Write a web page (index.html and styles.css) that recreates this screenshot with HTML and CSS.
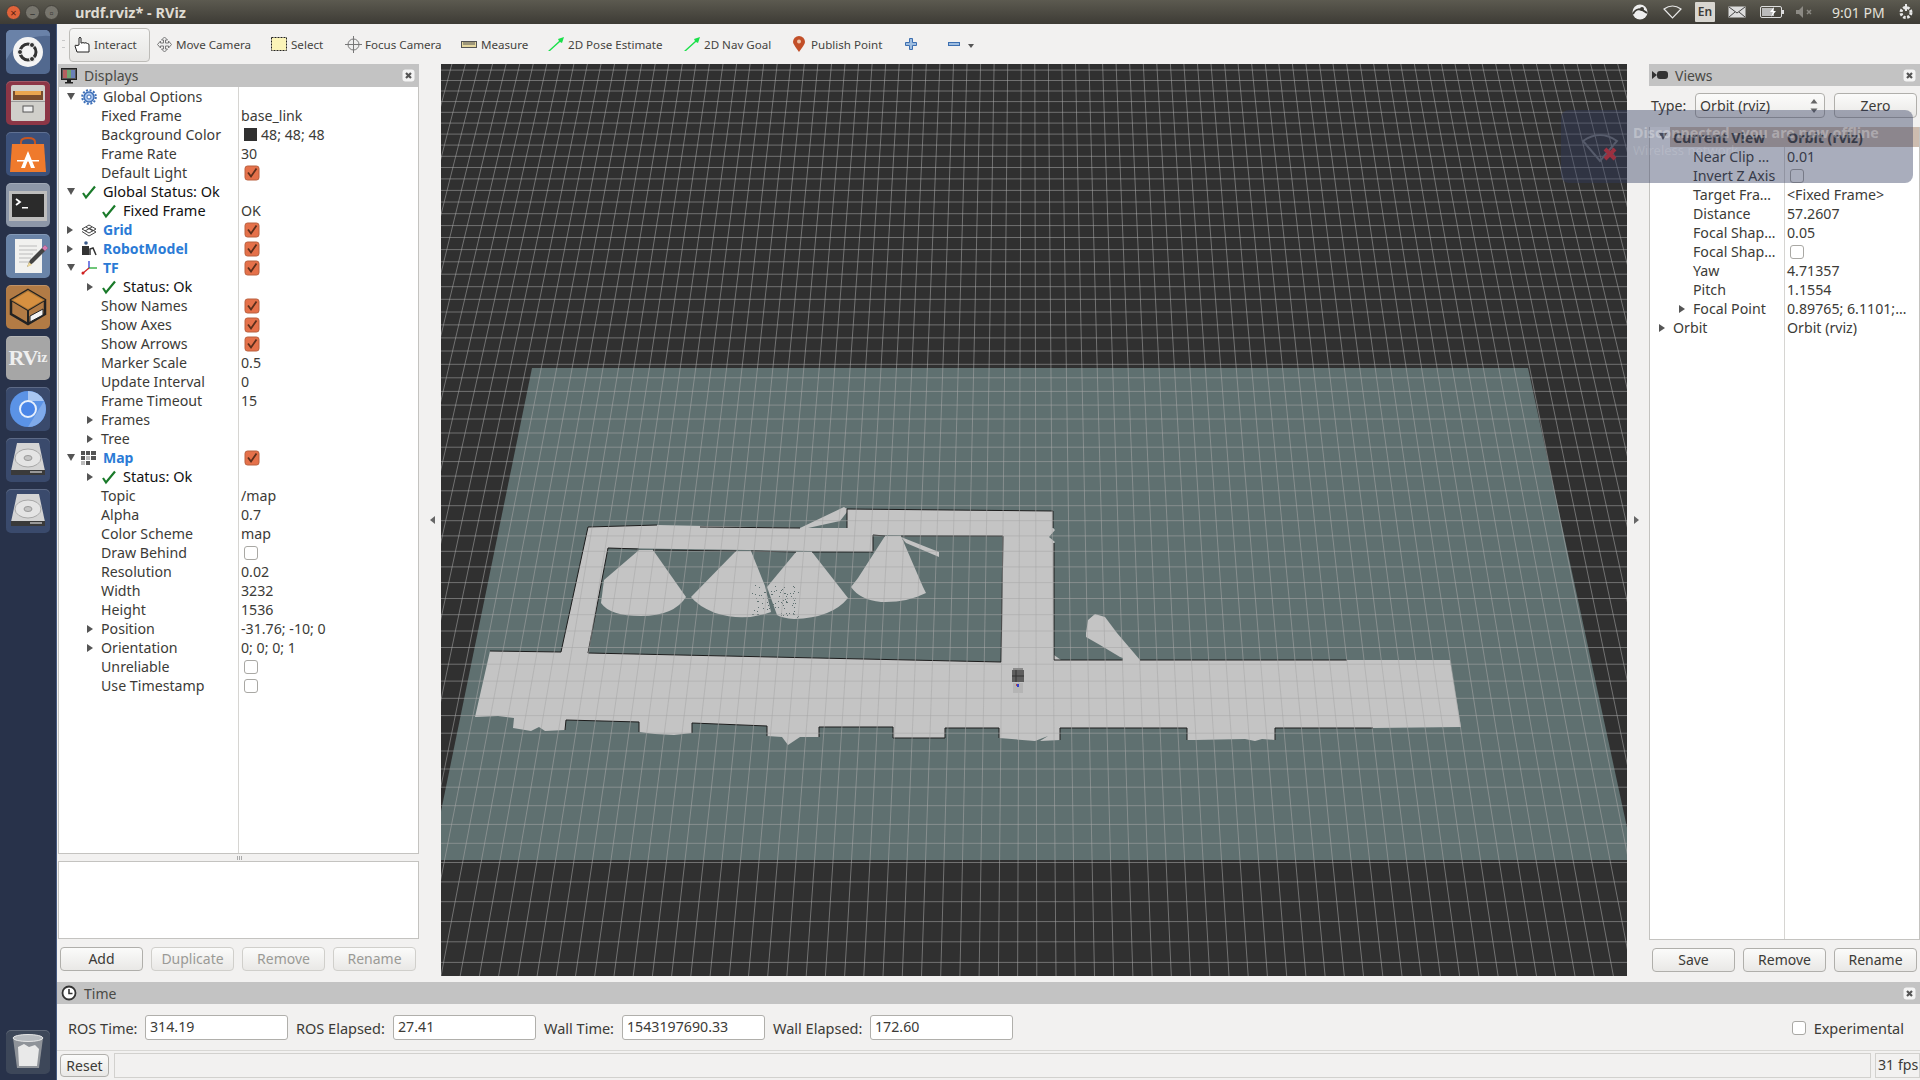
FILE: index.html
```html
<!DOCTYPE html>
<html lang="en">
<head>
<meta charset="utf-8">
<title>urdf.rviz* - RViz</title>
<link rel="stylesheet" href="styles.css">
</head>
<body>
<svg class="defs" width="0" height="0">
  <symbol id="chk" viewBox="0 0 16 16"><path d="M2 9l3 4.500L14 2.500" fill="none" stroke="#1a7a2a" stroke-width="2.200"/></symbol>
  <symbol id="cbx" viewBox="0 0 16 16"><rect x="1" y="1" width="14" height="14" rx="2.500" fill="#e5714a" stroke="#b9603f"/><path d="M4 7.500l3 4 5.500-8" fill="none" stroke="#5b2f1c" stroke-width="1.800"/></symbol>
  <symbol id="cls" viewBox="0 0 13 13"><rect x="0.500" y="0.500" width="12" height="12" rx="3" fill="#f4f4f4"/><path d="M4 4l5 5M9 4l-5 5" stroke="#555" stroke-width="2.200"/></symbol>
  <symbol id="disk" viewBox="0 0 44 44"><path d="M11 5h22l6 28v4H5v-4z" fill="#d4d4d4"/><ellipse cx="22" cy="20" rx="13" ry="9" fill="#e4e4e4" stroke="#a8a8a8"/><ellipse cx="22" cy="20" rx="4" ry="2.500" fill="#c4c4c4" stroke="#999"/><rect x="5" y="32" width="34" height="5" fill="#3a3a3a"/><rect x="24" y="33" width="12" height="2" fill="#999"/></symbol>
</svg>

<header class="topbar">
  <div class="winbtns">
    <span class="wb wb-close">×</span><span class="wb">–</span><span class="wb">▫</span>
  </div>
  <span class="wintitle">urdf.rviz* - RViz</span>
  <div class="tray">
    <svg class="t-ic" width="16" height="16" viewBox="0 0 16 16"><circle cx="8" cy="8" r="7.500" fill="#eee"/><path d="M1 10c3-6 7-6 14-1" fill="none" stroke="#3d3b35" stroke-width="2"/><circle cx="10" cy="5" r="2" fill="#3d3b35"/></svg>
    <svg class="t-ic" width="19" height="14" viewBox="0 0 19 14"><path d="M1 4q8.500-6 17 0l-8.500 9z" fill="none" stroke="#e8e8e8" stroke-width="1.200"/></svg>
    <span class="lang">En</span>
    <svg class="t-ic" width="18" height="12" viewBox="0 0 18 12"><rect x="0.500" y="0.500" width="17" height="11" fill="#ddd"/><path d="M1 1l8 6 8-6M1 11l6-5M17 11l-6-5" fill="none" stroke="#444"/></svg>
    <svg class="t-ic" width="24" height="12" viewBox="0 0 24 12"><rect x="0.500" y="0.500" width="21" height="11" rx="1.500" fill="none" stroke="#ddd"/><rect x="2" y="2" width="12" height="8" fill="#bbb"/><path d="M14 1l-4 5h3l-2 5 5-6h-3z" fill="#fff"/><rect x="22" y="4" width="2" height="4" fill="#ddd"/></svg>
    <svg class="t-ic t-mute" width="18" height="12" viewBox="0 0 18 12"><path d="M0 4h3l4-4v12l-4-4H0z" fill="#8c8a84"/><path d="M11 4l4 4M15 4l-4 4" stroke="#8c8a84" stroke-width="1.500"/></svg>
    <span class="clock">9:01 PM</span>
    <svg class="t-ic" width="16" height="16" viewBox="0 0 16 16"><circle cx="8" cy="8.500" r="5" fill="none" stroke="#e8e8e8" stroke-width="3" stroke-dasharray="2.500 1.500"/><path d="M8 0v7" stroke="#e8e8e8" stroke-width="2"/></svg>
  </div>
</header>

<div class="desk">
  <nav class="launcher">
    <div class="tile t-ubuntu"><svg width="44" height="44" viewBox="0 0 44 44"><path d="M0 30Q14 4 44 6V0H0z" fill="#6a82a8"/><circle cx="22" cy="22" r="15" fill="#f4f4f4"/><circle cx="22" cy="22" r="8" fill="none" stroke="#333" stroke-width="3"/><circle cx="14" cy="22" r="2.500" fill="#333" stroke="#f4f4f4"/><circle cx="26" cy="15" r="2.500" fill="#333" stroke="#f4f4f4"/><circle cx="26" cy="29" r="2.500" fill="#333" stroke="#f4f4f4"/></svg></div>
    <div class="tile t-files"><svg width="44" height="44" viewBox="0 0 44 44"><rect x="5" y="4" width="34" height="36" rx="2" fill="#d0cfca"/><rect x="7" y="10" width="30" height="9" fill="#7a4d2c"/><rect x="9" y="10" width="26" height="4" fill="#e9a64f"/><rect x="5" y="20" width="34" height="1" fill="#999"/><rect x="17" y="25" width="10" height="6" fill="#eee" stroke="#555"/></svg></div>
    <div class="tile t-soft"><svg width="44" height="44" viewBox="0 0 44 44"><path d="M15 12v-2q0-4 7-4t7 4v2" fill="none" stroke="#c9561f" stroke-width="2"/><path d="M6 12h32l2 28H4z" fill="#ef7a2c"/><path d="M22 19l-7 17h4l3-8 3 8h4z" fill="#fff"/><rect x="11" y="28" width="22" height="1.500" fill="#fff"/></svg></div>
    <div class="tile t-term"><svg width="44" height="44" viewBox="0 0 44 44"><rect x="3" y="8" width="38" height="30" fill="#bdbdbd"/><rect x="6" y="11" width="32" height="23" fill="#2b2b2b"/><path d="M10 16l4 3-4 3" fill="none" stroke="#fff" stroke-width="1.800"/><rect x="16" y="24" width="6" height="1.500" fill="#fff"/></svg></div>
    <div class="tile t-edit"><svg width="44" height="44" viewBox="0 0 44 44"><rect x="9" y="5" width="27" height="34" fill="#f1f1ef"/><path d="M13 12h18M13 16h18M13 20h14M13 24h12M13 28h10" stroke="#bbb"/><path d="M21 33l3-7 15-15 3 3-15 15z" fill="#444"/><path d="M36 14l3-3 3 3-3 3z" fill="#d67ab0"/><path d="M21 33l2-5 3 3z" fill="#ecd79a"/></svg></div>
    <div class="tile t-sub"><svg width="44" height="44" viewBox="0 0 44 44"><path d="M22 5l17 10v14L22 39 5 29V15z" fill="none" stroke="#222" stroke-width="2.500"/><path d="M5 15l17 10 17-10M22 25v14" fill="none" stroke="#222" stroke-width="2"/><path d="M5 15l17-10 17 10-17 10z" fill="#e79a3f" opacity=".7"/><path d="M24 31l13-7v6l-13 7z" fill="#f4f4f4" stroke="#222"/></svg></div>
    <div class="tile t-rviz"><span class="rviz-r">R</span><span class="rviz-v">V</span><span class="rviz-i">iz</span></div>
    <div class="tile t-chrome"><svg width="44" height="44" viewBox="0 0 44 44"><circle cx="22" cy="22" r="18" fill="#5b93e6"/><path d="M22 4a18 18 0 0 1 16 10H22z" fill="#a9c7f2"/><path d="M22 40l8-13 8-13a18 18 0 0 1-16 26z" fill="#7faaea"/><circle cx="22" cy="22" r="8" fill="#4a86e8" stroke="#e8f0fc" stroke-width="2"/></svg></div>
    <div class="tile t-disk"><svg width="44" height="44"><use href="#disk"/></svg></div>
    <div class="tile t-disk"><svg width="44" height="44"><use href="#disk"/></svg></div>
    <div class="launcher-fill"></div>
    <div class="tile t-trash"><svg width="44" height="44" viewBox="0 0 44 44"><path d="M7 8h30l-4 30H11z" fill="#8f9399"/><ellipse cx="22" cy="8" rx="15" ry="3.500" fill="#b7bbc0" stroke="#e5e5e5"/><path d="M12 17l6-3 5 3 6-2 4 4-2 17H13z" fill="#e9e9e9"/></svg></div>
  </nav>

  <div class="app">
    <div class="toolbar">
      <span class="handle"></span>
      <button class="tool tool-on"><svg class="ti ti17" width="17" height="17" viewBox="0 0 17 17"><path d="M5 9V2q1-1.500 2 0v5h1q1-1 2 0h1q1-1 2 .5h.5q1.500 0 1.500 1.500v7H3L1 10q0-1.500 2-.5z" fill="#fff" stroke="#222" stroke-width="1"/></svg>Interact</button>
      <span class="tool t-move"><svg class="ti ti17" width="17" height="17" viewBox="0 0 17 17"><path d="M8.500 1l3 3h-2v3h3v-2l3 3.500-3 3.500v-2h-3v3h2l-3 3-3-3h2v-3h-3v2l-3-3.500 3-3.500v2h3V4h-2z" fill="#eee" stroke="#777"/></svg>Move Camera</span>
      <span class="tool t-select"><svg class="ti" width="16" height="14" viewBox="0 0 16 14"><rect x="0.500" y="0.500" width="15" height="13" fill="#fbf4b8" stroke="#222" stroke-dasharray="2 1"/></svg>Select</span>
      <span class="tool t-focus"><svg class="ti ti17" width="17" height="17" viewBox="0 0 17 17"><circle cx="8.500" cy="8.500" r="5.500" fill="#eee" stroke="#777"/><path d="M8.500 0v17M0 8.500h17" stroke="#777"/></svg>Focus Camera</span>
      <span class="tool t-measure"><svg class="ti" width="16" height="7" viewBox="0 0 16 7"><rect x="0.500" y="0.500" width="15" height="6" fill="#e6d8a0" stroke="#555"/><path d="M3 1v3M5 1v3M7 1v3M9 1v3M11 1v3M13 1v3" stroke="#555"/></svg>Measure</span>
      <span class="tool t-pose"><svg class="ti" width="16" height="14" viewBox="0 0 16 14"><path d="M0 14L11 4l-1-2 6-2-2 6-2-1L2 14z" fill="#1be04a"/></svg>2D Pose Estimate</span>
      <span class="tool t-nav"><svg class="ti" width="16" height="14" viewBox="0 0 16 14"><path d="M0 14L11 4l-1-2 6-2-2 6-2-1L2 14z" fill="#1be04a"/></svg>2D Nav Goal</span>
      <span class="tool t-pub"><svg class="ti ti12" width="12" height="16" viewBox="0 0 12 16"><path d="M6 16Q0 8 0 6a6 6 0 0 1 12 0q0 2-6 10z" fill="#c24f28"/><circle cx="6" cy="5.500" r="2" fill="#eec3a8"/></svg>Publish Point</span>
      <svg class="plus" width="12" height="12" viewBox="0 0 12 12"><path d="M4.500 0.500h3v4h4v3h-4v4h-3v-4h-4v-3h4z" fill="#9ebde0" stroke="#3d6fb0"/></svg>
      <svg class="minus" width="12" height="4" viewBox="0 0 12 4"><rect x="0.500" y="0.500" width="11" height="3" fill="#9ebde0" stroke="#3d6fb0"/></svg>
      <span class="drop"></span>
    </div>

    <div class="work">
      <section class="displays">
        <div class="dock-title">
          <svg class="dock-ic" width="16" height="16" viewBox="0 0 16 16"><rect x="0.500" y="0.500" width="15" height="11" fill="#555" stroke="#222"/><rect x="2" y="2" width="4" height="8" fill="#b45f5f"/><rect x="6" y="2" width="4" height="8" fill="#6fa36f"/><rect x="10" y="2" width="4" height="8" fill="#6a80b8"/><path d="M6 12h4v2h2v1.500H4V14h2z" fill="#222"/></svg>
          <span class="dock-name">Displays</span>
          <svg class="dock-x" width="13" height="13"><use href="#cls"/></svg>
        </div>
        <div class="tree">
          <div class="col-line"></div>
          <div class="row"><div class="name l0"><i class="ar down"></i><svg class="ic" width="16" height="16" viewBox="0 0 16 16"><circle cx="8" cy="8" r="5" fill="#a8c4ec" stroke="#3d6fb8" stroke-width="1.500"/><circle cx="8" cy="8" r="6.800" fill="none" stroke="#3d6fb8" stroke-width="2" stroke-dasharray="2 1.600"/><circle cx="8" cy="8" r="2" fill="#fff" stroke="#3d6fb8"/></svg><span>Global Options</span></div><div class="val"></div></div>
          <div class="row"><div class="name p1">Fixed Frame</div><div class="val">base_link</div></div>
          <div class="row"><div class="name p1">Background Color</div><div class="val"><b class="swatch"></b>48; 48; 48</div></div>
          <div class="row"><div class="name p1">Frame Rate</div><div class="val">30</div></div>
          <div class="row"><div class="name p1">Default Light</div><div class="val"><svg class="cb"><use href="#cbx"/></svg></div></div>
          <div class="row blk"><div class="name l0"><i class="ar down"></i><svg class="ic" width="16" height="16"><use href="#chk"/></svg><span>Global Status: Ok</span></div><div class="val"></div></div>
          <div class="row blk"><div class="name l1"><i class="ar none"></i><svg class="ic" width="16" height="16"><use href="#chk"/></svg><span>Fixed Frame</span></div><div class="val dim">OK</div></div>
          <div class="row"><div class="name l0 blue"><i class="ar right"></i><svg class="ic" width="16" height="16" viewBox="0 0 16 16"><path d="M8 3l7 4-7 4-7-4zM8 6l7 4-7 4" fill="none" stroke="#444"/><path d="M1 9.500L8 14M5 5l7 4M11 5L4 9" fill="none" stroke="#444"/></svg><span>Grid</span></div><div class="val"><svg class="cb"><use href="#cbx"/></svg></div></div>
          <div class="row"><div class="name l0 blue"><i class="ar right"></i><svg class="ic" width="16" height="16" viewBox="0 0 16 16"><circle cx="5" cy="2" r="1.800" fill="#3a5a8a"/><rect x="1" y="5" width="7" height="9" fill="#333"/><path d="M9 14V8l3-1 3 7" fill="none" stroke="#333" stroke-width="1.500"/></svg><span>RobotModel</span></div><div class="val"><svg class="cb"><use href="#cbx"/></svg></div></div>
          <div class="row"><div class="name l0 blue"><i class="ar down"></i><svg class="ic" width="16" height="16" viewBox="0 0 16 16"><path d="M8 8V1" stroke="#2030d0" stroke-width="1.200"/><path d="M8 8h8" stroke="#10a020" stroke-width="1.200"/><path d="M8 8l-7 6" stroke="#d02020" stroke-width="1.200"/><circle cx="2" cy="13" r="1.500" fill="#d02020"/></svg><span>TF</span></div><div class="val"><svg class="cb"><use href="#cbx"/></svg></div></div>
          <div class="row blk"><div class="name l1"><i class="ar right"></i><svg class="ic" width="16" height="16"><use href="#chk"/></svg><span>Status: Ok</span></div><div class="val"></div></div>
          <div class="row"><div class="name p1">Show Names</div><div class="val"><svg class="cb"><use href="#cbx"/></svg></div></div>
          <div class="row"><div class="name p1">Show Axes</div><div class="val"><svg class="cb"><use href="#cbx"/></svg></div></div>
          <div class="row"><div class="name p1">Show Arrows</div><div class="val"><svg class="cb"><use href="#cbx"/></svg></div></div>
          <div class="row"><div class="name p1">Marker Scale</div><div class="val">0.5</div></div>
          <div class="row"><div class="name p1">Update Interval</div><div class="val">0</div></div>
          <div class="row"><div class="name p1">Frame Timeout</div><div class="val">15</div></div>
          <div class="row"><div class="name l1"><i class="ar right"></i><span>Frames</span></div><div class="val"></div></div>
          <div class="row"><div class="name l1"><i class="ar right"></i><span>Tree</span></div><div class="val"></div></div>
          <div class="row"><div class="name l0 blue"><i class="ar down"></i><svg class="ic" width="16" height="16" viewBox="0 0 16 16"><path d="M0 1h4v4H0zM5 1h4v4H5zM10 1h5v4h-5zM0 6h4v4H0zM10 6h5v4h-5zM5 11h4v4H5z" fill="#555"/><path d="M5 6h4v4H5zM0 11h4v4H0z" fill="#bbb"/></svg><span>Map</span></div><div class="val"><svg class="cb"><use href="#cbx"/></svg></div></div>
          <div class="row blk"><div class="name l1"><i class="ar right"></i><svg class="ic" width="16" height="16"><use href="#chk"/></svg><span>Status: Ok</span></div><div class="val"></div></div>
          <div class="row"><div class="name p1">Topic</div><div class="val">/map</div></div>
          <div class="row"><div class="name p1">Alpha</div><div class="val">0.7</div></div>
          <div class="row"><div class="name p1">Color Scheme</div><div class="val">map</div></div>
          <div class="row"><div class="name p1">Draw Behind</div><div class="val"><i class="cb-off"></i></div></div>
          <div class="row"><div class="name p1">Resolution</div><div class="val">0.02</div></div>
          <div class="row"><div class="name p1">Width</div><div class="val">3232</div></div>
          <div class="row"><div class="name p1">Height</div><div class="val">1536</div></div>
          <div class="row"><div class="name l1"><i class="ar right"></i><span>Position</span></div><div class="val">-31.76; -10; 0</div></div>
          <div class="row"><div class="name l1"><i class="ar right"></i><span>Orientation</span></div><div class="val">0; 0; 0; 1</div></div>
          <div class="row"><div class="name p1">Unreliable</div><div class="val"><i class="cb-off"></i></div></div>
          <div class="row"><div class="name p1">Use Timestamp</div><div class="val"><i class="cb-off"></i></div></div>
        </div>
        <div class="split-h"></div>
        <div class="descr"></div>
        <div class="btns">
          <button class="btn">Add</button><button class="btn off">Duplicate</button><button class="btn off">Remove</button><button class="btn off">Rename</button>
        </div>
      </section>

      <div class="gutter"><i class="tri-l"></i></div>

      <div class="canvas">
        <svg id="scene" width="1186" height="912" viewBox="441 64 1186 912">
          <rect x="441" y="64" width="1186" height="912" fill="#303030"/>
          <polygon points="532,368 1528,368 1634,860 431,860" fill="#5f7070"/>
          <path fill="#c4c4c4" fill-rule="evenodd" d="M490,651 561,652 588,527 657,525 753,527 800,528 844,507 847,509 1053,511 1053,528 1055,530 1049,537 1055,542 1054,543 1054,660 1123,660 1123,658 1120,657 1100,645 1086,637 1086,633 1088,620 1095,614 1105,617 1117,633 1140,660 1450,660 1461,727 1373,728 1275,728 1275,740 1262,739 1255,741 1245,739 1195,740 1187,740 1187,728 1060,728 1060,740 1040,741 1048,736 1035,741 999,738 999,728 945,728 945,738 893,738 893,727 819,727 819,737 800,737 788,745 782,737 767,736 767,726 692,723 692,733 674,735 655,734 639,732 639,722 566,720 565,730 545,731 539,727 531,731 513,728 514,718 498,716 475,717Z M608,548 873,552 873,535 1003,536 1001,662 588,653Z M808,528 847,528 847,512 840,521Z"/>
          <path fill="#c4c4c4" d="M639,550H653L686,597Q674,616 641,616Q610,616 601,603L604,580Z"/>
          <path fill="#c4c4c4" d="M736,551H751L765,586 771,612Q744,622 715,613Q698,606 691,597Z"/>
          <path fill="#c4c4c4" d="M796,552H812L848,598Q832,618 794,619Q782,618 777,615L767,587Z"/>
          <path fill="#c4c4c4" d="M885,536H901L923,587 926,593Q906,603 881,602Q860,600 851,587L858,578Z"/>
          <polygon fill="#c4c4c4" points="901,537 939,552 939,557 906,543"/>
          <polygon fill="#c4c4c4" points="1054,655 1061,660 1054,660"/>
          <path fill="none" stroke="#1c1c1c" stroke-width="1" d="M490,651 561,652 588,527 657,525M700,527 800,528M847,528 847,509 1053,511 1053,528M1054,543 1054,660 1123,660M1140,660 1347,660M1373,728 1275,728 1275,740M1187,740 1187,728 1060,728 1060,740M999,738 999,728 945,728 945,738 893,738 893,727 819,727 819,737M767,736 767,726 692,723 692,733M639,732 639,722 566,720 565,730M608,548 639,549M653,550 736,551M751,551 796,552M812,552 873,552 873,535 885,536M901,536 1003,536 1001,662 588,653 608,548"/>
          <g id="specks" fill="#5f7070"></g>
          <g id="grid" stroke="#a8a8a8" stroke-opacity=".55" stroke-width="1"></g>
          <rect x="1012" y="670" width="12" height="12" fill="#5e5e5e"/><rect x="1013" y="668" width="10" height="2" fill="#8b8b8b"/><path d="M1016 670v12M1012 676h12" stroke="#333"/>
          <rect x="1013" y="683" width="10" height="10" fill="#b5b5b5"/><rect x="1017" y="684" width="2" height="3" fill="#3040d0"/><rect x="1016" y="684" width="1" height="2" fill="#c04040"/>
        </svg>
      </div>

      <div class="gutter"><i class="tri-r"></i></div>

      <section class="views">
        <div class="dock-title vt">
          <svg class="dock-ic" width="16" height="10" viewBox="0 0 16 10"><path d="M0 1l5 4-5 4z" fill="#333"/><rect x="5" y="1" width="11" height="8" rx="3" fill="#333"/></svg>
          <span class="dock-name">Views</span>
          <svg class="dock-x" width="13" height="13"><use href="#cls"/></svg>
        </div>
        <div class="typerow">
          <label>Type:</label>
          <div class="combo">Orbit (rviz)<svg class="updown" width="8" height="14" viewBox="0 0 8 14"><path d="M4 0l3.500 4.500h-7zM4 14L.5 9.500h7z" fill="#666"/></svg></div>
          <button class="btn zero">Zero</button>
        </div>
        <div class="tree vtree">
          <div class="col-line"></div>
          <div class="row head"><div class="name v0"><i class="ar down"></i><span>Current View</span></div><div class="val">Orbit (rviz)</div></div>
          <div class="row"><div class="name v1p">Near Clip …</div><div class="val">0.01</div></div>
          <div class="row"><div class="name v1p">Invert Z Axis</div><div class="val"><i class="cb-off"></i></div></div>
          <div class="row"><div class="name v1p">Target Fra…</div><div class="val">&lt;Fixed Frame&gt;</div></div>
          <div class="row"><div class="name v1p">Distance</div><div class="val">57.2607</div></div>
          <div class="row"><div class="name v1p">Focal Shap…</div><div class="val">0.05</div></div>
          <div class="row"><div class="name v1p">Focal Shap…</div><div class="val"><i class="cb-off"></i></div></div>
          <div class="row"><div class="name v1p">Yaw</div><div class="val">4.71357</div></div>
          <div class="row"><div class="name v1p">Pitch</div><div class="val">1.1554</div></div>
          <div class="row"><div class="name v1"><i class="ar right"></i><span>Focal Point</span></div><div class="val">0.89765; 6.1101;…</div></div>
          <div class="row"><div class="name v0"><i class="ar right"></i><span>Orbit</span></div><div class="val">Orbit (rviz)</div></div>
        </div>
        <div class="btns vbtns">
          <button class="btn">Save</button><button class="btn">Remove</button><button class="btn">Rename</button>
        </div>
      </section>
    </div>

    <section class="timepanel">
      <div class="dock-title tt">
        <svg class="dock-ic" width="16" height="16" viewBox="0 0 16 16"><circle cx="8" cy="8" r="6.500" fill="#fff" stroke="#333" stroke-width="1.800"/><path d="M8 4v4.500h3.500" fill="none" stroke="#333" stroke-width="1.600"/></svg>
        <span class="dock-name">Time</span>
        <svg class="dock-x" width="13" height="13"><use href="#cls"/></svg>
      </div>
      <div class="timerow">
        <label class="w77">ROS Time:</label><div class="field">314.19</div>
        <label class="w97">ROS Elapsed:</label><div class="field">27.41</div>
        <label class="w78">Wall Time:</label><div class="field">1543197690.33</div>
        <label class="w97">Wall Elapsed:</label><div class="field">172.60</div>
        <div class="exp"><i class="cb-off"></i><span>Experimental</span></div>
      </div>
    </section>

    <footer class="status">
      <button class="btn reset">Reset</button>
      <div class="msg"></div>
      <div class="fps">31 fps</div>
    </footer>
  </div>
</div>

<div class="notify">
  <svg class="n-ic" width="50" height="40" viewBox="0 0 50 40"><path d="M4 14q17-12 34 0l-17 20z" fill="none" stroke="#565b6b" stroke-width="2"/><path d="M26 22l10 10M36 22L26 32" stroke="#9c3040" stroke-width="4"/></svg>
  <div class="n-text">
    <div class="n-h">Disconnected - you are now offline</div>
    <div class="n-s">Wireless network</div>
  </div>
</div>
<script src="grid.js"></script>
</body>
</html>
```
FILE: styles.css
```css
* { box-sizing: border-box; }
html, body { margin: 0; height: 100%; overflow: hidden; }
body { font-family: "Noto Sans", "Open Sans", sans-serif; font-size: 14.2px; color: #3c3b37; background: #f2f1f0; width: 1920px; height: 1080px; display: flex; flex-direction: column; }
button { font: inherit; }
.defs { position: absolute; }

.topbar { height: 24px; flex: none; display: flex; align-items: center; background: linear-gradient(#5c5a50, #3d3b35); color: #dfdbd2; }
.winbtns { display: flex; gap: 4px; margin-left: 6px; width: 69px; }
.wb { width: 15px; height: 15px; border-radius: 50%; background: #77756d; border: 1px solid #44423c; color: #3c3b37; font-size: 11px; line-height: 13px; text-align: center; overflow: hidden; }
.wb-close { background: #e0633a; color: #5a2010; }
.wintitle { font-weight: 700; font-size: 14.5px; }
.tray { margin-left: auto; display: flex; align-items: center; height: 24px; width: 288px; }
.tray .t-ic:nth-child(1) { margin-left: 0; }
.tray .t-ic:nth-child(2) { margin-left: 15px; }
.lang { margin-left: 13px; width: 20px; height: 20px; background: #d8d6d0; color: #3c3b37; font-size: 12px; font-weight: 600; text-align: center; line-height: 20px; border-radius: 1px; }
.tray .t-ic:nth-child(4) { margin-left: 13px; }
.tray .t-ic:nth-child(5) { margin-left: 14px; }
.tray .t-mute { margin-left: 12px; }
.clock { margin-left: 18px; font-size: 14px; color: #e4e1da; white-space: nowrap; }
.tray .t-ic:last-child { margin-left: 13px; }

.desk { flex: 1; display: flex; min-height: 0; }
.launcher { width: 57px; flex: none; background: #28324a; border-right: 1px solid #465a80; padding: 6px; display: flex; flex-direction: column; gap: 7px; }
.launcher-fill { flex: 1; }
.tile { width: 44px; height: 44px; flex: none; border-radius: 5px; background: #3f5073; box-shadow: inset 0 1px 0 rgba(255,255,255,.18); overflow: hidden; }
.tile svg { display: block; }
.t-ubuntu { background: #52698f; }
.t-files { background: #8c3646; }
.t-soft { background: #3c517a; }
.t-term { background: #8d97a8; }
.t-edit { background: #6a84a8; }
.t-sub { background: #b27b45; }
.t-rviz { background: #a6a6a6; color: #efefef; font-family: "Liberation Serif", serif; font-weight: 700; display: flex; align-items: center; justify-content: center; }
.rviz-r { font-size: 22px; }
.rviz-v { font-size: 22px; margin-left: -2px; }
.rviz-i { font-size: 14px; margin-left: -1px; }
.t-chrome, .t-disk { background: #3a4a6c; }
.t-trash { background: #3d4759; }

.app { flex: 1; min-width: 0; display: flex; flex-direction: column; }
.toolbar { height: 40px; flex: none; display: flex; align-items: center; font-size: 11.6px; color: #45443f; }
.handle { width: 3px; height: 8px; margin-left: 5px; border-top: 1px solid #c8c8c8; border-bottom: 1px solid #c8c8c8; }
.tool { display: inline-flex; align-items: center; white-space: nowrap; background: none; border: 0; padding: 0; color: inherit; flex: none; }
.ti { flex: none; margin-right: 4px; }
.ti17 { margin-right: 3px; }
.ti12 { margin-right: 6px; }
.tool-on { margin-left: 4px; width: 81px; height: 34px; border: 1px solid #bdbcb8; border-radius: 4px; background: linear-gradient(#f6f6f5, #e7e6e4); padding-left: 4px; margin-top: 1px; }
.t-move { margin-left: 6px; width: 115px; }
.t-select { width: 74px; }
.t-focus { width: 116px; }
.t-measure { width: 87px; }
.t-pose { width: 136px; }
.t-nav { width: 109px; }
.t-pub { width: 112px; }
.minus { margin-left: 31px; }
.drop { margin-left: 8px; margin-top: 4px; border-left: 3.500px solid transparent; border-right: 3.500px solid transparent; border-top: 4px solid #555; }

.work { height: 918px; flex: none; display: flex; }
.displays { width: 362px; flex: none; display: flex; flex-direction: column; padding-left: 1px; }
.views { flex: 1; min-width: 0; display: flex; flex-direction: column; }
.gutter { width: 22px; flex: none; display: flex; align-items: center; justify-content: center; }
.tri-l { border-top: 4px solid transparent; border-bottom: 4px solid transparent; border-right: 5px solid #666; margin: -6px 0 0 4px; }
.tri-r { border-top: 4px solid transparent; border-bottom: 4px solid transparent; border-left: 5px solid #666; margin: -6px 4px 0 0; }
.canvas { width: 1186px; height: 912px; flex: none; background: #303030; }
.canvas svg { display: block; }

.dock-title { height: 23px; flex: none; background: #c3c3c3; display: flex; align-items: center; color: #4a4a46; font-size: 14px; padding: 0 4px 0 3px; }
.dock-ic { flex: none; margin-right: 7px; }
.dock-name { flex: 1; }
.dock-x { flex: none; }
.vt { height: 22px; }
.tt { height: 22px; padding-left: 4px; }

.tree { position: relative; height: 767px; flex: none; background: #fff; border: 1px solid #c4c3c0; border-top: 0; overflow: hidden; }
.col-line { position: absolute; top: 0; bottom: 0; left: 179px; width: 1px; background: #d6d5d2; }
.row { height: 19px; display: flex; line-height: 19px; white-space: nowrap; position: relative; }
.name { width: 179px; flex: none; display: flex; align-items: center; }
.val { flex: 1; padding-left: 3px; display: flex; align-items: center; min-width: 0; }
.l0 { padding-left: 8px; }
.l1 { padding-left: 28px; }
.p1 { padding-left: 42px; }
.ar { width: 14px; flex: none; height: 8px; position: relative; display: block; }
.ar::before { content: ""; position: absolute; left: 0; top: 0; }
.ar.down::before { border-left: 4px solid transparent; border-right: 4px solid transparent; border-top: 7px solid #555; }
.ar.right::before { border-top: 4px solid transparent; border-bottom: 4px solid transparent; border-left: 6px solid #555; }
.ic { flex: none; margin-right: 6px; }
.blue { color: #2b7bd6; font-weight: 700; font-size: 14px; }
.blk .name { color: #111; font-size: 14.5px; }
.swatch { width: 13px; height: 13px; background: #303030; margin: 0 4px 0 3px; flex: none; }
.cb { width: 16px; height: 16px; margin-left: 3px; flex: none; }
.cb-off { width: 14px; height: 14px; margin-left: 3px; background: #fff; border: 1px solid #a9a8a4; border-radius: 3px; flex: none; display: block; }

.split-h { height: 7px; flex: none; display: flex; justify-content: center; align-items: center; padding-right: 0; }
.split-h::before { content: ""; width: 5px; height: 4px; margin-right: -1px; background: repeating-linear-gradient(90deg, #aaa 0 1px, transparent 1px 2px); }
.descr { height: 78px; flex: none; background: #fff; border: 1px solid #c4c3c0; }
.btns { display: flex; gap: 8px; padding: 8px 0 0 2px; }
.btn { width: 83px; height: 24px; border: 1px solid #b0afab; border-radius: 4px; background: linear-gradient(#fbfbfa, #e9e8e6); color: #3c3b37; padding: 0; font-size: 14px; line-height: 22px; flex: none; }
.btn.off { color: #9a9a96; border-color: #d0cfcb; }

.vtree { height: 813px; margin-top: 9px; border-top: 0; }
.vtree .col-line { left: 134px; }
.vtree .name { width: 134px; overflow: hidden; }
.v0 { padding-left: 9px; }
.v1 { padding-left: 29px; }
.v1p { padding-left: 43px; }
.head { background: #cdbcaf; font-weight: 700; margin-left: 20px; height: 20px; }
.head .name { width: 114px; padding-left: 3px; position: relative; overflow: visible; }
.vtree .head .name { width: 114px; overflow: visible; }
.head .ar { position: absolute; left: -11px; top: 6px; }
.typerow { height: 25px; margin-top: 7px; display: flex; align-items: center; padding-left: 2px; flex: none; }
.typerow label { width: 44px; flex: none; }
.combo { width: 130px; height: 25px; border: 1px solid #b0afab; border-radius: 4px; background: linear-gradient(#fbfbfa, #eeedeb); padding-left: 4px; line-height: 23px; display: flex; align-items: center; justify-content: space-between; padding-right: 6px; flex: none; }
.updown { flex: none; }
.zero { margin-left: 9px; height: 25px; }
.vbtns { padding-top: 8px; padding-left: 3px; }

.timepanel { height: 68px; flex: none; }
.timerow { height: 46px; display: flex; align-items: center; padding-left: 11px; padding-top: 1px; font-size: 14.5px; }
.timerow label { white-space: nowrap; flex: none; }
.w77 { width: 77px; }
.w78 { width: 78px; }
.w97 { width: 97px; }
.field { width: 143px; height: 25px; margin-right: 8px; background: #fff; border: 1px solid #b0afab; border-radius: 3px; padding-left: 4px; line-height: 22px; font-size: 14.2px; flex: none; }
.exp { margin-left: auto; display: flex; align-items: center; gap: 8px; padding-right: 16px; }
.exp .cb-off { margin-left: 0; }

.status { height: 30px; flex: none; border-top: 1px solid #d8d7d4; display: flex; align-items: center; padding-left: 3px; gap: 5px; }
.reset { width: 49px; height: 23px; }
.msg { flex: 1; height: 25px; border: 1px solid #d2d1ce; }
.fps { width: 45px; height: 25px; border: 1px solid #d2d1ce; margin-left: -1px; line-height: 22px; padding-left: 2px; white-space: nowrap; overflow: hidden; }

.notify { position: absolute; left: 1561px; top: 110px; width: 352px; height: 73px; background: rgba(50,60,95,.42); border-radius: 8px; display: flex; align-items: center; }
.n-ic { margin-left: 18px; flex: none; }
.n-text { margin-left: 4px; align-self: flex-start; padding-top: 14px; color: rgba(255,255,255,.3); }
.n-h { font-weight: 700; font-size: 14.3px; line-height: 18px; }
.n-s { font-size: 13px; line-height: 16px; color: rgba(255,255,255,.14); }
```
FILE: grid.js
```js
// Projects the ground grid of the 3D view onto the canvas.
(function () {
  var NS = "http://www.w3.org/2000/svg";
  var grid = document.getElementById("grid");
  var specks = document.getElementById("specks");
  var HVY = -2100, K = 454300, D0 = 149.35;
  var VY = -2119, CX = 1030, PX = 0.00621, PHASE = 0.354;
  function line(x1, y1, x2, y2) {
    var l = document.createElementNS(NS, "line");
    l.setAttribute("x1", x1.toFixed(1));
    l.setAttribute("y1", y1.toFixed(1));
    l.setAttribute("x2", x2.toFixed(1));
    l.setAttribute("y2", y2.toFixed(1));
    grid.appendChild(l);
  }
  for (var n = -10; n < 80; n++) {
    var y = HVY + K / (D0 + n);
    if (y >= 64 && y <= 976) line(441, y, 1627, y);
  }
  for (var i = -80; i <= 80; i++) {
    var u = i + PHASE;
    line(CX + u * PX * (64 - VY), 64, CX + u * PX * (976 - VY), 976);
  }
  // Sparse unknown cells in the overlap of the two middle scan cones.
  var seed = 7;
  function rnd() { seed = (seed * 16807) % 2147483647; return seed / 2147483647; }
  for (var s = 0; s < 90; s++) {
    var r = document.createElementNS(NS, "rect");
    r.setAttribute("x", (752 + rnd() * 46).toFixed(0));
    r.setAttribute("y", (585 + rnd() * 32).toFixed(0));
    r.setAttribute("width", "1");
    r.setAttribute("height", "1");
    specks.appendChild(r);
  }
})();
```
